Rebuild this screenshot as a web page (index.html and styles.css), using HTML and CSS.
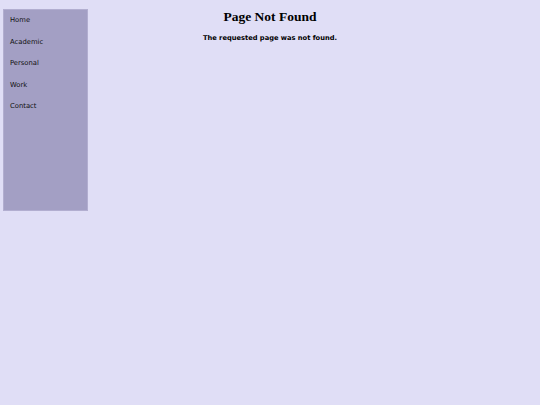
FILE: index.html
```html
<!DOCTYPE html>
<html>
<head>
<meta charset="utf-8">
<link rel="stylesheet" href="styles.css">
</head>
<body>
<div class="layout">
  <nav class="sidebar">
    <a class="nav-item">Home</a>
    <a class="nav-item">Academic</a>
    <a class="nav-item">Personal</a>
    <a class="nav-item">Work</a>
    <a class="nav-item">Contact</a>
  </nav>
  <main class="content">
    <h1 class="title">Page Not Found</h1>
    <p class="message">The requested page was not found.</p>
  </main>
</div>
</body>
</html>
```
FILE: styles.css
```css
html, body {
  margin: 0;
  padding: 0;
  background: #e0def6;
  height: 100%;
}
.layout {
  display: grid;
  grid-template-columns: 1fr;
  grid-template-rows: auto;
}
.sidebar {
  grid-area: 1 / 1;
  justify-self: start;
  margin: 9px 0 0 3px;
  width: 83px;
  height: 195px;
  background: #a39fc4;
  border: 1px solid #b2aed0;
  display: flex;
  flex-direction: column;
  padding-top: 5px;
  box-sizing: content-box;
}
.nav-item {
  font-family: "DejaVu Sans", sans-serif;
  font-size: 6.8px;
  color: #111;
  padding-left: 6px;
  height: 21.5px;
  line-height: 10px;
}
.content {
  grid-area: 1 / 1;
  text-align: center;
}
.title {
  font-family: "Liberation Serif", serif;
  font-weight: bold;
  font-size: 13.5px;
  margin: 9px 0 0;
  line-height: 16px;
  color: #000;
}
.message {
  font-family: "DejaVu Sans", sans-serif;
  font-weight: bold;
  font-size: 6.7px;
  margin: 9px 0 0;
  line-height: 8px;
  color: #000;
}
```
